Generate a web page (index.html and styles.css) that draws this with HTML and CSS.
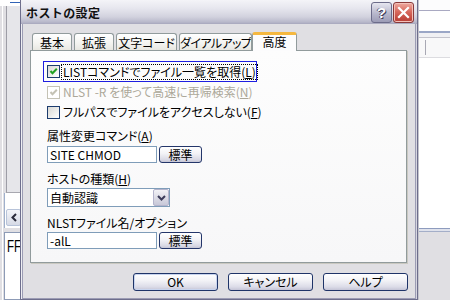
FILE: index.html
```html
<!DOCTYPE html>
<html lang="ja">
<head>
<meta charset="utf-8">
<title>ホストの設定</title>
<link rel="stylesheet" href="styles.css">
</head>
<body>
<div class="screen">
  <div class="lpane">
    <div class="lp-top"><span class="lp-blue"></span></div>
    <div class="lp-tree"></div>
    <div class="lp-scroll">
      <span class="sbtn"><svg width="8" height="9" viewBox="0 0 8 9"><path d="M6 1 L2.5 4.5 L6 8" fill="none" stroke="#2b2b3b" stroke-width="2"/></svg></span>
    </div>
    <div class="lp-log"><span class="logtxt">FF</span></div>
  </div>

  <div class="dialog">
    <div class="titlebar">
      <span class="title">ホストの設定</span>
      <span class="tb-help">?</span>
      <span class="tb-close"><svg width="13" height="13" viewBox="0 0 13 13"><path d="M2 2 L11 11 M11 2 L2 11" stroke="#fff" stroke-width="2.2" stroke-linecap="square"/></svg></span>
    </div>
    <div class="body">
      <div class="tabs">
        <span class="tab t-kihon">基本</span>
        <span class="tab t-kakucho">拡張</span>
        <span class="tab t-moji">文字コード</span>
        <span class="tab t-dial">ダイアルアップ</span>
        <span class="tab sel t-kodo">高度</span>
      </div>
      <div class="panel">
        <div class="chk focus">
          <span class="box"><svg width="11" height="11" viewBox="0 0 11 11"><path d="M2.5 5 L4.5 7.2 L8.8 2.8" fill="none" stroke="#21a121" stroke-width="2"/></svg></span>
          <span class="txt dotted">LISTコマンドでファイル一覧を取得(<u>L</u>)</span>
        </div>
        <div class="chk">
          <span class="box dis"><svg width="11" height="11" viewBox="0 0 11 11"><path d="M2.5 5 L4.5 7.2 L8.8 2.8" fill="none" stroke="#c4c2b4" stroke-width="2"/></svg></span>
          <span class="txt gray">NLST -R を使って高速に再帰検索(<u>N</u>)</span>
        </div>
        <div class="chk">
          <span class="box"></span>
          <span class="txt">フルパスでファイルをアクセスしない(<u>F</u>)</span>
        </div>

        <div class="lbl lbl-a">属性変更コマンド(<u>A</u>)</div>
        <div class="field f-a">
          <span class="input">SITE CHMOD</span>
          <span class="sbutton">標準</span>
        </div>

        <div class="lbl lbl-h">ホストの種類(<u>H</u>)</div>
        <div class="select">
          <span class="sel-text">自動認識</span>
          <span class="sel-btn"><svg width="9" height="6" viewBox="0 0 9 6"><path d="M1 1 L4.5 4.5 L8 1" fill="none" stroke="#3c3c5a" stroke-width="2"/></svg></span>
        </div>

        <div class="lbl lbl-n">NLSTファイル名/オプション</div>
        <div class="field f-n">
          <span class="input">-alL</span>
          <span class="sbutton">標準</span>
        </div>
      </div>
      <div class="buttons">
        <span class="btn default">OK</span>
        <span class="btn">キャンセル</span>
        <span class="btn">ヘルプ</span>
      </div>
    </div>
  </div>

  <div class="rpane">
    <div class="rp-a"></div>
    <div class="rp-b"></div>
    <div class="rp-c"></div>
    <div class="rp-head"><span class="hsep"></span></div>
    <div class="rp-list"></div>
    <div class="rp-line"></div>
    <div class="rp-rest"></div>
  </div>
</div>
</body>
</html>
```

FILE: styles.css
```css
* { box-sizing: border-box; }
html, body { margin: 0; padding: 0; }
body {
  width: 450px;
  height: 300px;
  overflow: hidden;
  background: #fff;
  color: #000;
  font-family: "Noto Sans CJK JP", "Noto Sans", sans-serif;
  font-size: 12px;
  line-height: 14px;
  font-feature-settings: "palt";
}
u { text-decoration: underline; text-underline-offset: 1px; }

.screen {
  display: grid;
  grid-template-columns: 20px 398px 32px;
  height: 300px;
}

/* ---------- left background window ---------- */
.lpane {
  display: flex;
  flex-direction: column;
  background: linear-gradient(90deg, #e0dfe3 0 2px, #ffffff 2px 3px, #e0dfe3 3px);
}
.lp-top { height: 6px; background: #fff; padding: 2px 0 0 10px; }
.lp-blue { display: block; height: 1px; background: #3163b6; }
.lp-tree {
  height: 187px;
  margin-left: 6px;
  border-left: 1px solid #9d9da6;
  border-bottom: 1px solid #a8a8b0;
  background: #e6e6ea;
}
.lp-scroll {
  height: 35px;
  background: #fff;
  margin-left: 4px;
  border-left: 1px solid #9fb0cc;
  padding: 16px 0 0 1px;
}
.sbtn {
  display: flex;
  align-items: center;
  justify-content: center;
  width: 15px;
  height: 17px;
  border: 1px solid #b7c3d9;
  border-radius: 2px;
  background: linear-gradient(#f4f5f9, #d6dae6);
}
.lp-log {
  flex: 1;
  margin: 4px 0 0 4px;
  border: 1px solid #8d9bb6;
  border-right: none;
  background: #fff;
  padding: 5px 0 0 2px;
  overflow: hidden;
}
.logtxt {
  display: inline-block;
  font-family: "Liberation Sans", sans-serif;
  font-size: 17px;
  line-height: 17px;
  transform: scaleX(0.68);
  transform-origin: left;
}

/* ---------- right background window ---------- */
.rpane {
  display: flex;
  flex-direction: column;
  background: #e0dfe3;
  border-left: 1px solid #c4c4cc;
}
.rp-a { height: 11px; background: #fcfcfd; border-bottom: 1px solid #a9a9c2; }
.rp-b { height: 22px; background: #fff; border-bottom: 2px solid #9aa6c6; }
.rp-c { height: 4px; background: #f0f0f3; }
.rp-head {
  height: 21px;
  background: #f8f8f9;
  border-top: 1px solid #c3c3cc;
  border-bottom: 1px solid #dcdce0;
  padding: 2px 0 0 6px;
}
.hsep { display: block; width: 1px; height: 15px; background: #a8a8b4; }
.rp-list { height: 170px; background: #fff; }
.rp-line {
  height: 4px;
  border-top: 1px solid #8e9cbe;
  border-bottom: 1px solid #a4aec8;
  background: #dfe2ec;
}
.rp-rest { flex: 1; background: #e0dfe3; }

/* ---------- dialog ---------- */
.dialog {
  display: flex;
  flex-direction: column;
  height: 300px;
}
.titlebar {
  height: 24px;
  display: flex;
  align-items: center;
  gap: 1px;
  padding: 1px 3px 0 5px;
  border-left: 1px solid #6e6e8c;
  border-right: 1px solid #6e6e8c;
  background: linear-gradient(#f4f4f8 0%, #e6e6ee 35%, #d2d2de 70%, #b8b8ca 92%, #a6a6bc 100%);
}
.title {
  flex: 1;
  font-weight: bold;
  font-size: 12px;
  letter-spacing: 0.4px;
  font-feature-settings: normal;
  color: #111;
}
.tb-help, .tb-close {
  width: 21px;
  height: 21px;
  border-radius: 3px;
  display: flex;
  align-items: center;
  justify-content: center;
}
.tb-help {
  border: 1px solid #6c6c8a;
  background: linear-gradient(#e6e6f0, #b8b8cc 55%, #9c9cb6);
  color: #fff;
  font-family: "Liberation Sans", sans-serif;
  font-weight: bold;
  font-size: 15px;
  text-shadow: 1px 1px 0 #3e3e5a, -1px 0 0 #5a5a78;
}
.tb-close {
  border: 1px solid #8a3a3a;
  background: linear-gradient(#eeaaa0, #d86a5e 45%, #c24a40 80%, #b84038);
  box-shadow: inset 0 0 0 1px #f4c0b8;
}

.body {
  flex: 1;
  background: #e0dfe3;
  border: solid #6e6e8c;
  border-width: 0 1px 1px 1px;
  box-shadow: inset 1px 0 0 #eeeef3, inset 2px 0 0 #9c9cb4, inset -1px 0 0 #d6d6e0, inset -2px 0 0 #9c9cb4, inset 0 -1px 0 #9c9cb4;
  padding: 8px 10px 0 9px;
}

/* tabs */
.tabs {
  display: flex;
  align-items: flex-end;
  height: 18px;
  padding-left: 2px;
  position: relative;
  z-index: 1;
}
.tab {
  height: 17px;
  border: 1px solid #919b9c;
  border-bottom: none;
  border-radius: 3px 3px 0 0;
  background: linear-gradient(#ffffff, #f3f3f0 60%, #e8e7e1);
  text-align: center;
  padding-top: 2px;
  line-height: 14px;
  white-space: nowrap;
  overflow: hidden;
}
.t-kihon { width: 40px; margin-right: 2px; }
.t-kakucho { width: 40px; margin-right: 2px; }
.t-moji { width: 61px; margin-right: 2px; }
.t-dial { width: 73px; letter-spacing: -0.6px; }
.tab.sel {
  height: 19px;
  margin-bottom: -1px;
  border-top: 3px solid #f5b840;
  box-shadow: inset 0 0 0 0 transparent;
  background: #fcfcfd;
  padding-top: 0;
  position: relative;
}
.tab.sel::before {
  content: "";
  position: absolute;
  left: 0; right: 0; top: -3px;
  height: 1px;
  background: #e08a28;
}
.t-kodo { width: 45px; }

/* panel */
.panel {
  height: 213px;
  border: 1px solid #919b9c;
  box-shadow: 1px 1px 0 #c9c8c0;
  background: linear-gradient(#fdfdfd, #f7f7f8);
  padding: 10px 0 0 16px;
}
.chk {
  display: flex;
  align-items: center;
  gap: 3px;
  height: 20px;
}
.chk.focus {
  height: 21px;
  width: 214px;
  margin-left: -4px;
  border: 1px solid #1e1ee0;
  padding-left: 3px;
}
.box {
  flex: none;
  width: 13px;
  height: 13px;
  border: 1px solid #1c3c6e;
  background: linear-gradient(135deg, #d8d8d4, #f4f4f2 70%, #ffffff);
  display: flex;
}
.box.dis { border-color: #c4c2b4; background: #fff; }
.txt { white-space: nowrap; line-height: 14px; }
.txt.dotted { outline: 1px dotted #000; outline-offset: 0; padding: 0 1px; margin-left: -1px; }
.txt.gray { color: #aca899; }

.lbl { line-height: 14px; white-space: nowrap; }
.lbl-a { margin-top: 7px; }
.lbl-h, .lbl-n { margin-top: 9px; }

.field { display: flex; gap: 2px; }
.f-a { margin-top: 3px; }
.f-n { margin-top: 2px; }
.input {
  width: 110px;
  height: 17px;
  border: 1px solid #7f9db9;
  background: #fff;
  padding-left: 2px;
  line-height: 15px;
  white-space: nowrap;
}
.sbutton {
  width: 43px;
  height: 17px;
  border: 1px solid #24366a;
  border-radius: 3px;
  background: linear-gradient(#ffffff, #f2f2f6 45%, #d8d8e4 85%, #c6c6d6);
  display: flex;
  align-items: center;
  justify-content: center;
  line-height: 14px;
}

.select {
  margin-top: 2px;
  width: 123px;
  height: 19px;
  border: 1px solid #7f9db9;
  background: #fff;
  display: flex;
  align-items: stretch;
  padding: 0 0 0 2px;
}
.sel-text { flex: 1; line-height: 17px; white-space: nowrap; }
.sel-btn {
  width: 16px;
  border: 1px solid #b4b4cc;
  border-radius: 2px;
  background: linear-gradient(#f2f2f6, #dcdce6 50%, #c8c8d8);
  display: flex;
  align-items: center;
  justify-content: center;
}

/* bottom buttons */
.buttons {
  display: flex;
  justify-content: flex-end;
  gap: 10px;
  margin-top: 10px;
  margin-right: -1px;
}
.btn {
  width: 85px;
  height: 18px;
  border: 1px solid #1f3468;
  border-radius: 3px;
  background: linear-gradient(#ffffff, #f3f3f7 40%, #dcdce8 80%, #c4c4d6);
  display: flex;
  align-items: center;
  justify-content: center;
  line-height: 14px;
}
.btn.default { box-shadow: inset 0 0 0 1px #c8d4ee; }
```
